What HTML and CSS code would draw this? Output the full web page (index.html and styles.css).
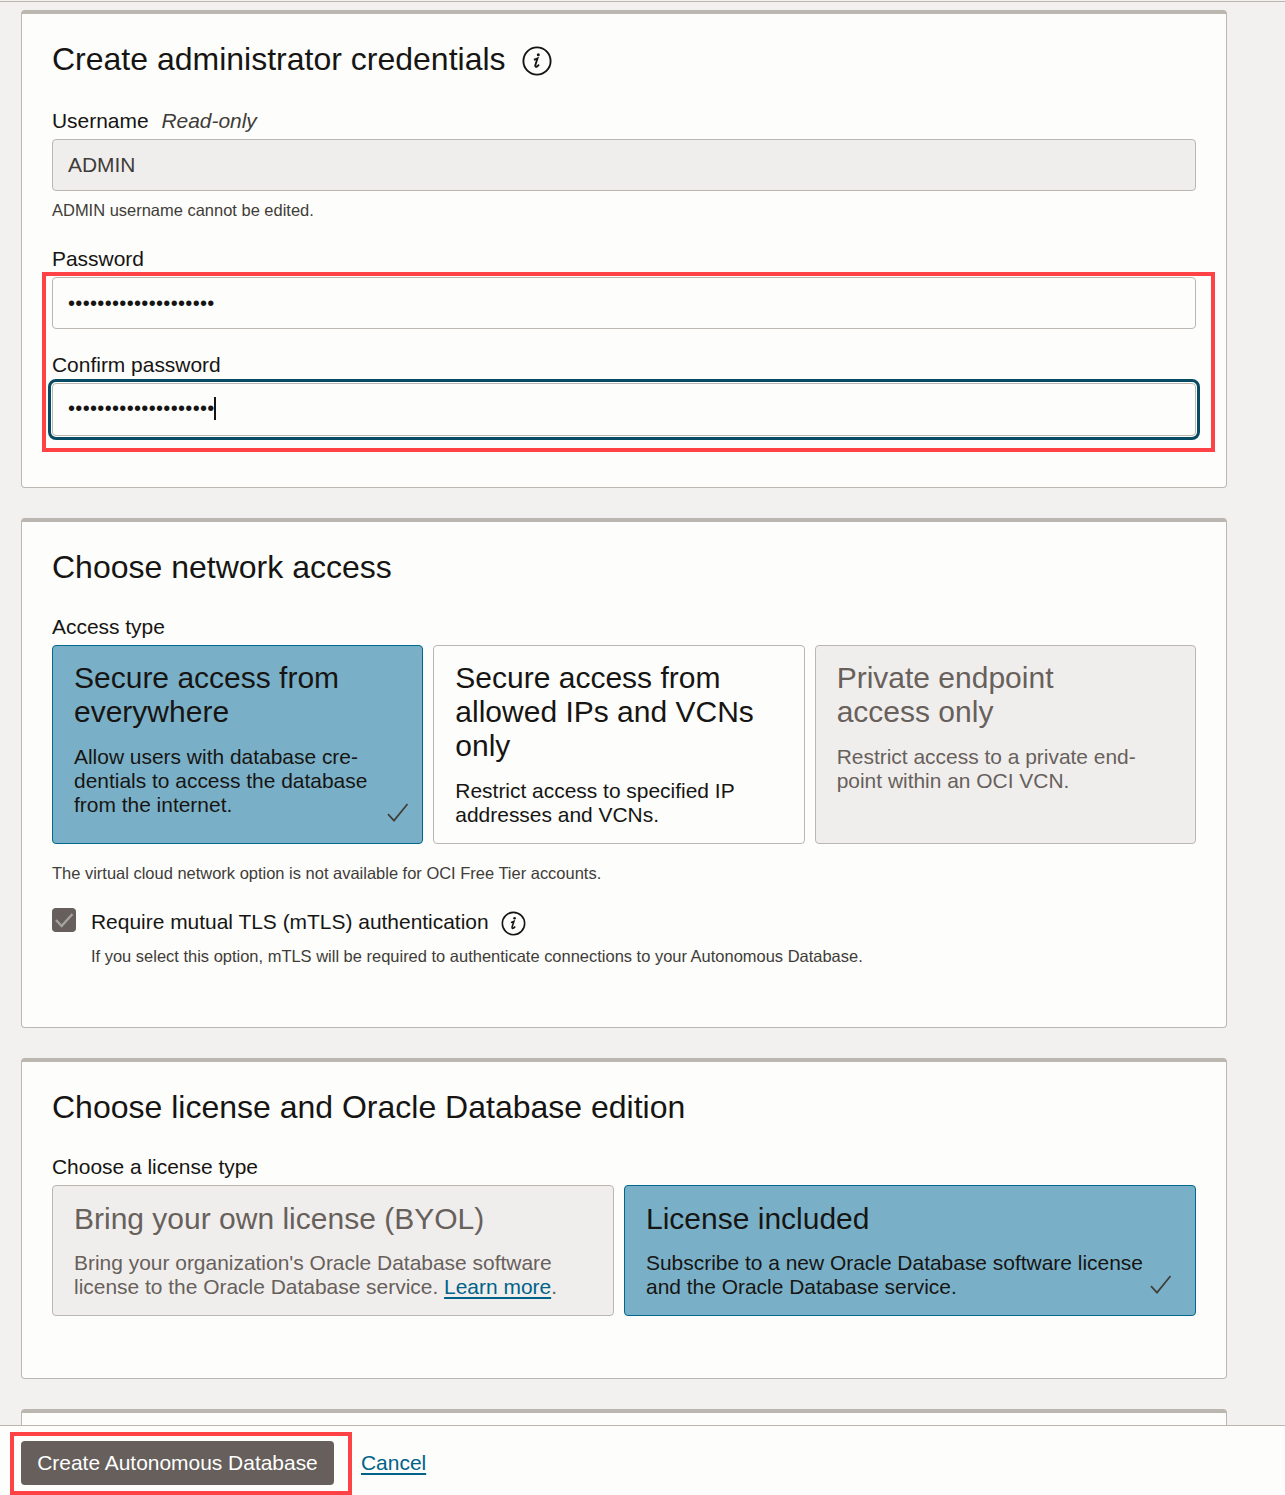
FILE: index.html
```html
<!DOCTYPE html>
<html lang="en">
<head>
<meta charset="utf-8">
<title>Create Autonomous Database</title>
<link rel="stylesheet" href="styles.css">
</head>
<body>
<div class="page">
  <main class="content">
    <section class="panel credentials">
      <h2 class="heading"><span>Create administrator credentials</span>
        <svg class="info info-large" viewBox="0 0 30 30"><circle cx="15" cy="15" r="13.6"/><path class="stem" d="M11.9 13.7c1.3-.3 2.3-.8 3.6-1.3l-2.2 6.9c-.4 1.5.8 1.9 1.8 1.1.8-.6 1.3-1.1 1.9-1.8"/><circle class="dot" cx="16.3" cy="8.7" r="1.5"/></svg>
      </h2>
      <div class="label">Username <em class="readonly">Read-only</em></div>
      <div class="field field-readonly">ADMIN</div>
      <p class="help">ADMIN username cannot be edited.</p>
      <div class="label">Password</div>
      <div class="field"><span class="dots">••••••••••••••••••••</span></div>
      <div class="label label-confirm">Confirm password</div>
      <div class="field field-focus"><span class="dots">••••••••••••••••••••</span><span class="caret"></span></div>
      <div class="highlight highlight-passwords"></div>
    </section>

    <section class="panel network">
      <h2 class="heading">Choose network access</h2>
      <div class="label">Access type</div>
      <div class="options options-access">
        <div class="option selected">
          <h3>Secure access from<br>everywhere</h3>
          <p>Allow users with database cre-<br>dentials to access the database<br>from the internet.</p>
          <svg class="tick" viewBox="0 0 22 20"><path d="M1 11.2L7 17.6 20.5 1"/></svg>
        </div>
        <div class="option">
          <h3>Secure access from<br>allowed IPs and VCNs<br>only</h3>
          <p>Restrict access to specified IP<br>addresses and VCNs.</p>
        </div>
        <div class="option disabled">
          <h3>Private endpoint<br>access only</h3>
          <p>Restrict access to a private end-<br>point within an OCI VCN.</p>
        </div>
      </div>
      <p class="help">The virtual cloud network option is not available for OCI Free Tier accounts.</p>
      <div class="check-row">
        <svg class="checkbox" viewBox="0 0 24 24"><rect width="24" height="24" rx="4"/><path d="M4 12l5.6 6L20.5 6"/></svg>
        <div>
          <div class="check-label"><span>Require mutual TLS (mTLS) authentication</span>
            <svg class="info info-small" viewBox="0 0 30 30"><circle cx="15" cy="15" r="13.4"/><path class="stem" d="M11.9 13.7c1.3-.3 2.3-.8 3.6-1.3l-2.2 6.9c-.4 1.5.8 1.9 1.8 1.1.8-.6 1.3-1.1 1.9-1.8"/><circle class="dot" cx="16.3" cy="8.7" r="1.6"/></svg>
          </div>
          <p class="help check-help">If you select this option, mTLS will be required to authenticate connections to your Autonomous Database.</p>
        </div>
      </div>
    </section>

    <section class="panel license">
      <h2 class="heading">Choose license and Oracle Database edition</h2>
      <div class="label">Choose a license type</div>
      <div class="options options-license">
        <div class="option disabled">
          <h3>Bring your own license (BYOL)</h3>
          <p>Bring your organization's Oracle Database software<br>license to the Oracle Database service. <a class="link">Learn more</a>.</p>
        </div>
        <div class="option selected">
          <h3>License included</h3>
          <p>Subscribe to a new Oracle Database software license<br>and the Oracle Database service.</p>
          <svg class="tick tick-license" viewBox="0 0 22 20"><path d="M1 11.2L7 17.6 20.5 1"/></svg>
        </div>
      </div>
    </section>

    <section class="panel"></section>
  </main>
  <footer class="footer">
    <div class="button">Create Autonomous Database</div>
    <a class="link cancel">Cancel</a>
    <div class="highlight highlight-create"></div>
  </footer>
</div>
</body>
</html>
```

FILE: styles.css
```css
* { box-sizing: border-box; }
body {
  margin: 0;
  background: #f3f1f0;
  color: #161513;
  font: 20.95px/24px "Liberation Sans", Arial, sans-serif;
}
h2, h3, p { margin: 0; font-weight: normal; }
.page { height: 1495px; display: flex; flex-direction: column; overflow: hidden; }
.content {
  flex: 1;
  min-height: 0;
  overflow: hidden;
  margin-top: 1px;
  border-top: 1px solid #bcb6b1;
  padding: 8px 58px 0 21px;
  display: flex;
  flex-direction: column;
  gap: 30px;
}
.panel {
  position: relative;
  flex: none;
  height: 100px;
  padding: 26px 30px 0;
  background: #fdfdfb;
  border: 1px solid #bcb6b1;
  border-top-width: 4px;
  border-radius: 4px;
}
.credentials { height: 478px; }
.network { height: 510px; }
.license { height: 321px; }
.heading {
  height: 38px;
  display: flex;
  align-items: center;
  gap: 15px;
  font-size: 32px;
  line-height: 38px;
  white-space: nowrap;
}
.label { height: 24px; margin: 29px 0 6px; }
.credentials .heading + .label { margin-top: 31px; }
.help + .label { margin-top: 27px; }
.credentials .label-confirm { margin-top: 24px; }
.readonly { margin-left: 7px; color: #403c38; }
.field {
  height: 52px;
  display: flex;
  align-items: center;
  padding: 0 15px;
  border: 1px solid #bcb6b1;
  border-radius: 4px;
}
.field-readonly { background: #f0eeed; color: #403c38; }
.field-focus { height: 53px; padding-bottom: 2px; outline: 3px solid #064b63; outline-offset: 1px; }
.dots { font-size: 20px; letter-spacing: 0.33px; line-height: 24px; padding-bottom: 1px; }
.caret { width: 2px; height: 23px; margin-left: -1px; background: #161513; }
.help {
  margin-top: 9px;
  font-size: 16.48px;
  line-height: 20px;
  color: #403c38;
}
.highlight { position: absolute; border: 4px solid #ff4245; pointer-events: none; }
.highlight-passwords { left: 20px; top: 258px; width: 1173px; height: 180px; }
.options { display: grid; gap: 10px; }
.options-access { grid-template-columns: 371.33px 371.33px 1fr; height: 199px; }
.options-license { grid-template-columns: 562px 572px; height: 131px; }
.option {
  position: relative;
  padding: 15px 21px;
  border: 1px solid #bcb6b1;
  border-radius: 4px;
  white-space: nowrap;
}
.option h3 { margin-bottom: 16px; font-size: 30px; line-height: 34px; }
.options-license .option { padding-top: 16px; }
.options-license h3 { margin-bottom: 15px; }
.selected { background: #7ab0c7; border-color: #00688c; }
.disabled { background: #f0eeed; color: #67605b; }
.tick {
  position: absolute;
  right: 13px;
  bottom: 20px;
  width: 22px;
  height: 20px;
  fill: none;
  stroke: #403c38;
  stroke-width: 1.7;
}
.tick-license { right: 23px; }
.network > .help { margin-top: 19px; }
.check-row { display: flex; gap: 15px; margin-top: 25px; }
.checkbox { width: 24px; height: 24px; }
.checkbox rect { fill: #665f5b; }
.checkbox path { fill: none; stroke: #a5a29f; stroke-width: 2.4; }
.check-label { display: flex; align-items: center; gap: 12px; height: 24px; margin-top: 2px; }
.check-help { margin-top: 12px; }
.info { flex: none; fill: none; stroke: #161513; stroke-width: 1.9; }
.info .dot { fill: #161513; stroke: none; }
.info-large { width: 30px; height: 30px; margin: 4px 0 0 1px; }
.info-small { width: 25px; height: 25px; margin-top: 2px; }
.link { color: #006289; text-decoration: underline; text-decoration-thickness: 2px; text-underline-offset: 3px; }
.footer {
  position: relative;
  flex: none;
  height: 70px;
  display: flex;
  align-items: flex-start;
  gap: 27px;
  padding: 15px 21px 0;
  border-top: 1px solid #bcb6b1;
  background: #fdfdfb;
}
.button {
  width: 313px;
  height: 44px;
  line-height: 44px;
  border-radius: 4px;
  background: #665f5b;
  color: #fff;
  text-align: center;
  white-space: nowrap;
}
.cancel { line-height: 44px; }
.highlight-create { left: 10px; top: 6px; width: 342px; height: 63px; }
```
